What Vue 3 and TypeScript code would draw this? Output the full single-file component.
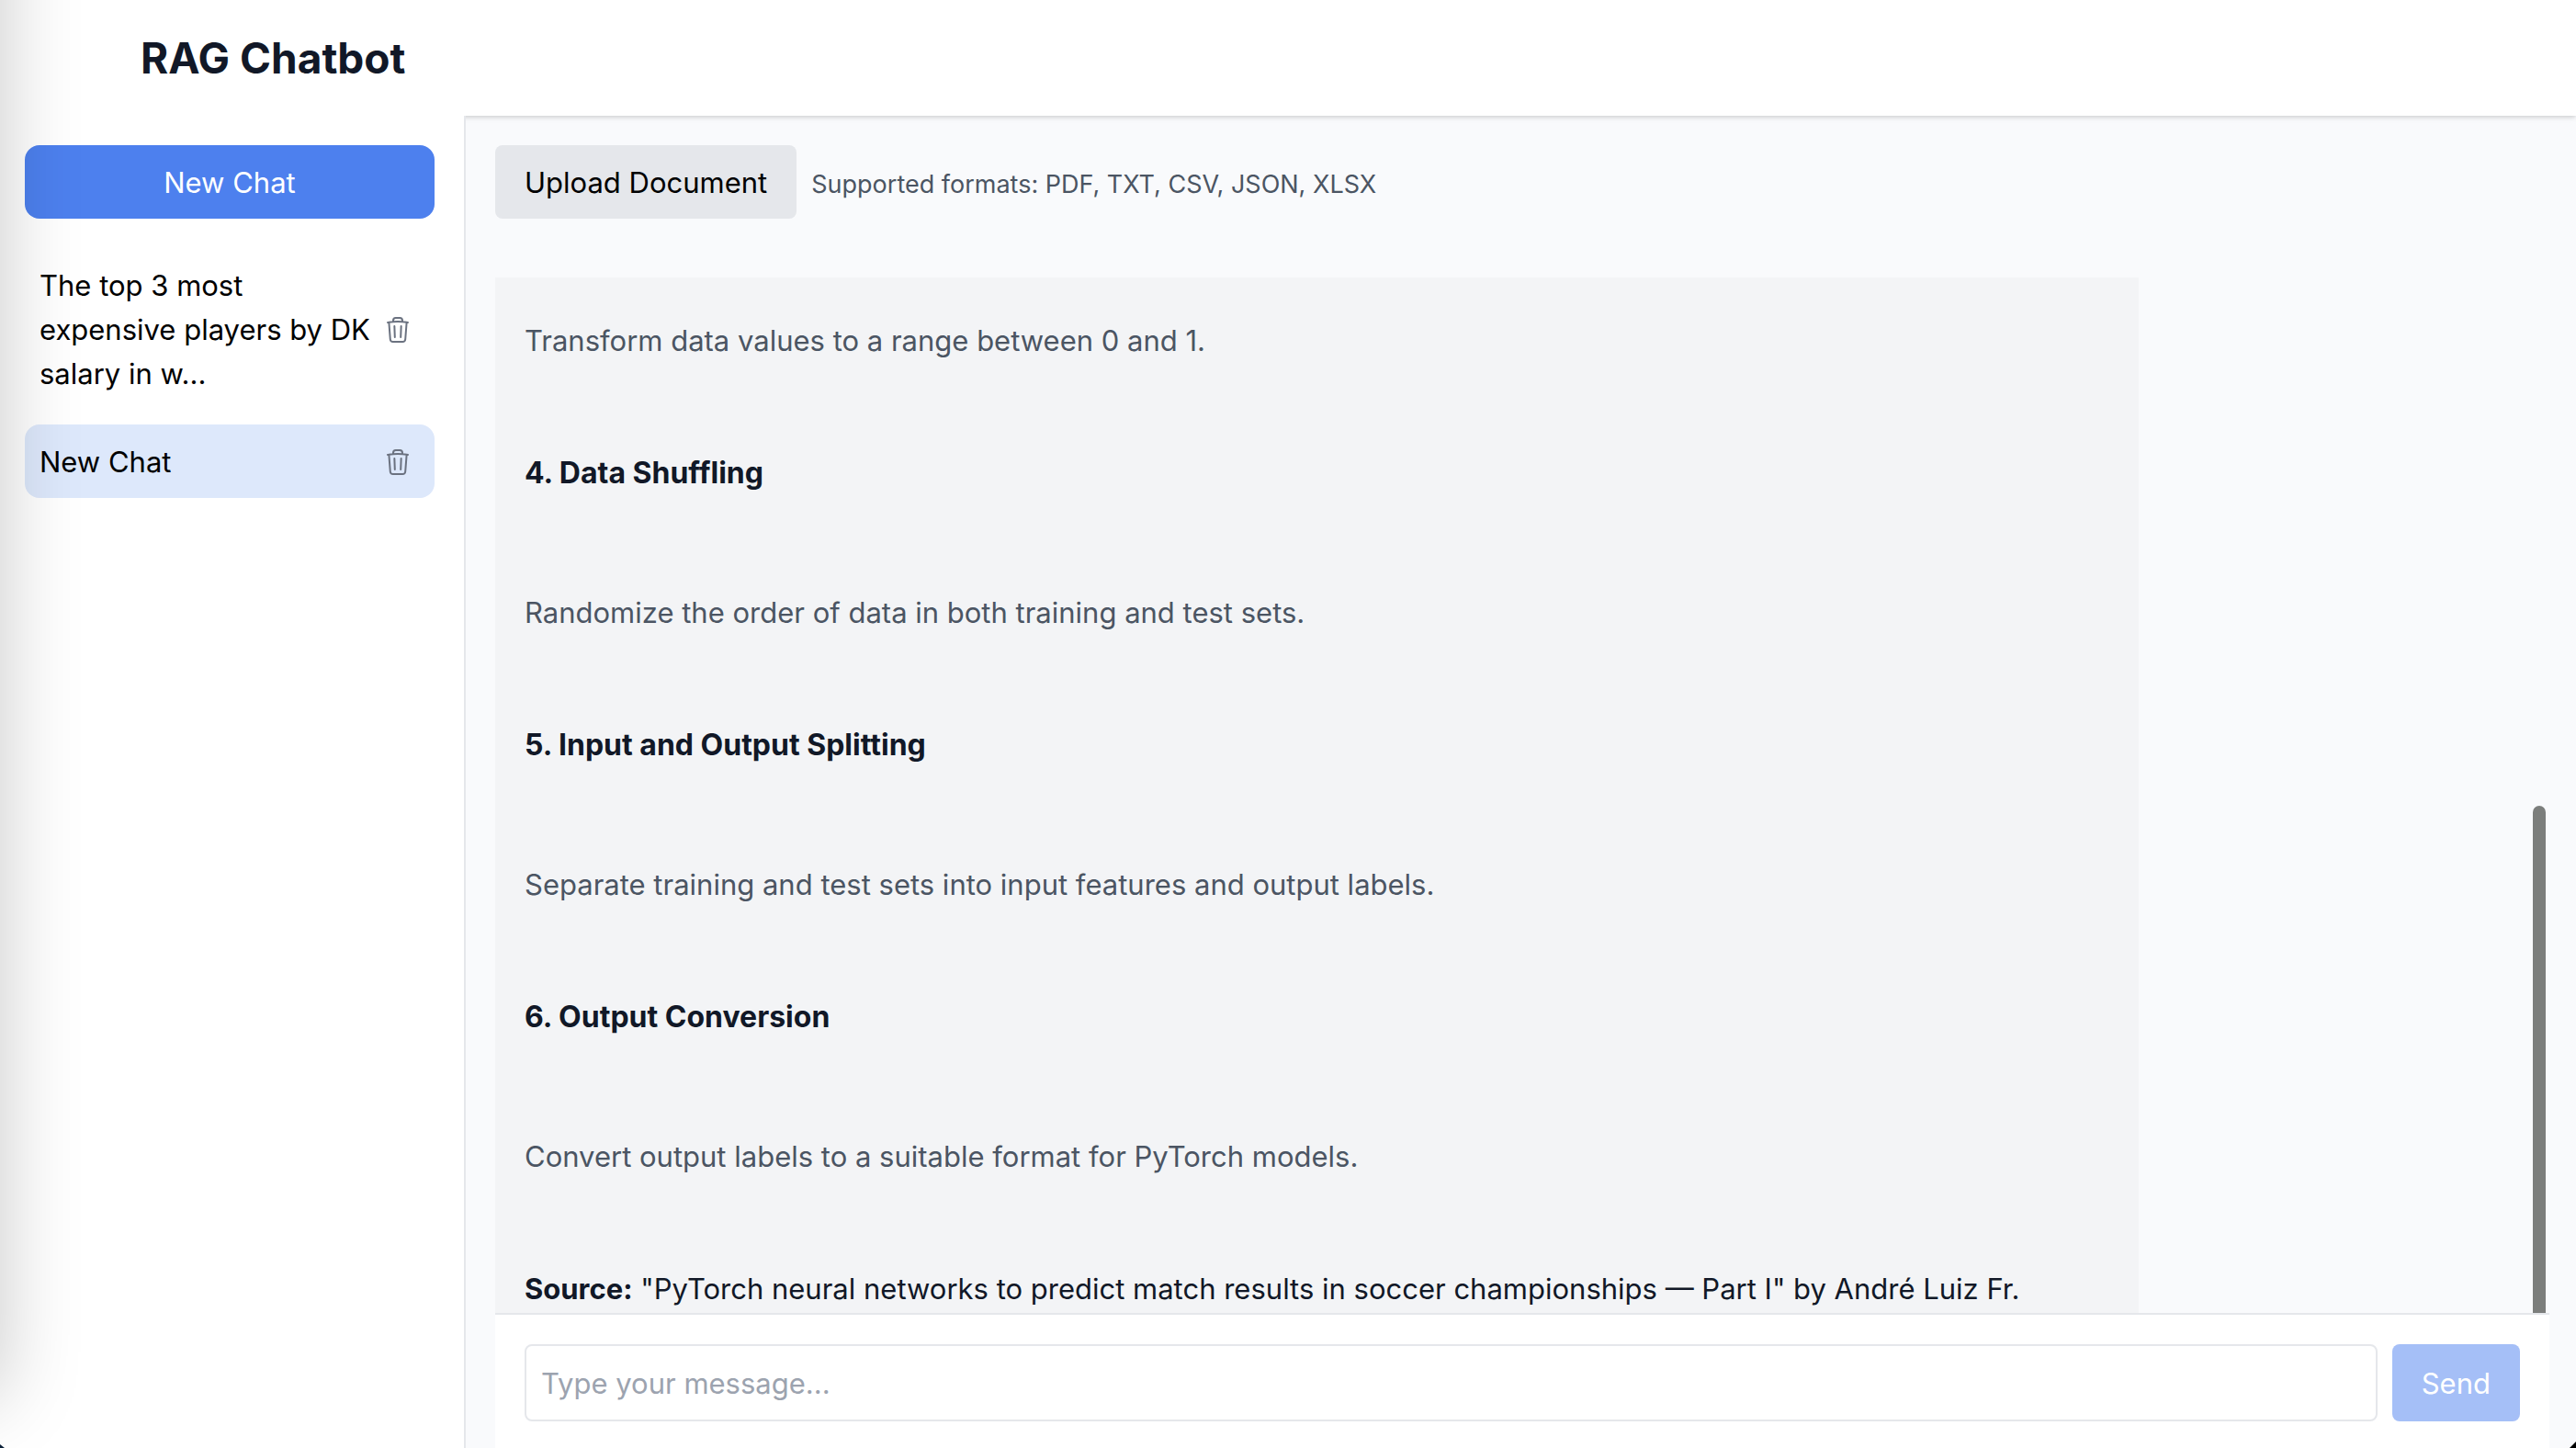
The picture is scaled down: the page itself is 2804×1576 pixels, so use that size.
<script setup lang="ts">
import { ref } from 'vue'

interface Chat {
  id: number
  title: string
}

interface Step {
  heading?: string
  text?: string
}

const chats: Chat[] = [
  { id: 1, title: 'The top 3 most expensive players by DK salary in w...' },
  { id: 2, title: 'New Chat' },
]
const activeId = ref(2)
const draft = ref('')

const steps: Step[] = [
  { text: 'Transform data values to a range between 0 and 1.' },
  { heading: '4. Data Shuffling' },
  { text: 'Randomize the order of data in both training and test sets.' },
  { heading: '5. Input and Output Splitting' },
  { text: 'Separate training and test sets into input features and output labels.' },
  { heading: '6. Output Conversion' },
  { text: 'Convert output labels to a suitable format for PyTorch models.' },
]
</script>

<template>
  <div class="app">
    <header class="header">
      <h1>RAG Chatbot</h1>
    </header>

    <div class="body">
      <aside class="sidebar">
        <button type="button" class="new-chat">New Chat</button>
        <ul class="chats">
          <li
            v-for="chat in chats"
            :key="chat.id"
            class="chat"
            :class="{ active: chat.id === activeId }"
            @click="activeId = chat.id"
          >
            <span class="chat-title">{{ chat.title }}</span>
            <button type="button" class="delete" aria-label="Delete chat">
              <svg viewBox="0 0 24 24" fill="none" stroke="currentColor" stroke-width="1.5" stroke-linecap="round" stroke-linejoin="round">
                <path d="m14.74 9-.346 9m-4.788 0L9.26 9m9.968-3.21c.342.052.682.107 1.022.166m-1.022-.165L18.16 19.673a2.25 2.25 0 0 1-2.244 2.077H8.084a2.25 2.25 0 0 1-2.244-2.077L4.772 5.79m14.456 0a48.108 48.108 0 0 0-3.478-.397m-12 .562c.34-.059.68-.114 1.022-.165m0 0a48.11 48.11 0 0 1 3.478-.397m7.5 0v-.916c0-1.18-.91-2.164-2.09-2.201a51.964 51.964 0 0 0-3.32 0c-1.18.037-2.09 1.022-2.09 2.201v.916m7.5 0a48.667 48.667 0 0 0-7.5 0" />
              </svg>
            </button>
          </li>
        </ul>
      </aside>

      <main class="main">
        <div class="upload">
          <button type="button" class="upload-button">Upload Document</button>
          <span class="formats">Supported formats: PDF, TXT, CSV, JSON, XLSX</span>
        </div>

        <section class="messages">
          <article class="message">
            <template v-for="(step, i) in steps" :key="i">
              <h3 v-if="step.heading">{{ step.heading }}</h3>
              <p v-else>{{ step.text }}</p>
            </template>
            <div class="source">
              <strong>Source:</strong> "PyTorch neural networks to predict match results in soccer championships — Part I" by André Luiz Fr.
            </div>
          </article>
          <div class="thumb"></div>
        </section>

        <form class="composer" @submit.prevent>
          <input v-model="draft" type="text" placeholder="Type your message..." aria-label="Message" />
          <button type="submit" class="send" :disabled="!draft">Send</button>
        </form>
      </main>
    </div>

    <div class="edge-shadow"></div>
    <div class="corner left"></div>
    <div class="corner right"></div>
  </div>
</template>

<style>
body {
  background: #ffffff;
}
</style>

<style scoped>
* {
  box-sizing: border-box;
}
.app {
  position: relative;
  display: flex;
  flex-direction: column;
  height: 100vh;
  overflow: hidden;
  font-family: Inter, "Liberation Sans", sans-serif;
  font-size: 31px;
  line-height: 48px;
  color: #000000;
}
button,
input {
  margin: 0;
  border: 0;
  font: inherit;
  color: inherit;
}
.header {
  position: relative;
  z-index: 1;
  flex: none;
  padding: 31px 153px;
  background: #ffffff;
  box-shadow: 0 2px 6px rgba(0, 0, 0, 0.1), 0 2px 4px -1px rgba(0, 0, 0, 0.1);
}
h1 {
  margin: 0;
  font-size: 46px;
  line-height: 64px;
  font-weight: 700;
  color: #111827;
}
.body {
  display: flex;
  flex: 1;
  min-height: 0;
}
.sidebar {
  position: relative;
  z-index: 2;
  flex: none;
  width: 507px;
  padding: 32px 32px 32px 27px;
  border-right: 2px solid #e5e7eb;
  background: #ffffff;
}
.new-chat {
  display: block;
  width: 100%;
  padding: 17px 16px 15px;
  border-radius: 16px;
  background: #4d80ee;
  color: #ffffff;
}
.chats {
  display: flex;
  flex-direction: column;
  gap: 16px;
  margin: 32px 0 0;
  padding: 0;
  list-style: none;
}
.chat {
  display: flex;
  align-items: center;
  padding: 17px 16px 15px;
  border-radius: 16px;
}
.chat.active {
  background: #dde8fb;
}
.chat-title {
  flex: 1;
}
.delete {
  display: flex;
  padding: 8px;
  margin: -8px 0;
  background: none;
  color: #6b7280;
}
.delete svg {
  width: 32px;
  height: 32px;
}
.main {
  display: flex;
  flex: 1;
  flex-direction: column;
  min-width: 0;
  padding: 32px 29px 0 32px;
  background: #f9fafc;
}
.upload {
  display: flex;
  align-items: baseline;
  gap: 16px;
  margin-bottom: 64px;
}
.upload-button {
  padding: 17px 32px 15px;
  border-radius: 8px;
  background: #e5e7eb;
}
.formats {
  font-size: 27px;
  line-height: 40px;
  color: #4b5563;
}
.messages {
  position: relative;
  flex: 1;
  min-height: 0;
  overflow: hidden;
}
.message {
  width: 80%;
  min-height: 100%;
  padding: 45px 32px 0;
  background: #f3f4f6;
  color: #111827;
}
.message p {
  margin: 0 0 96px;
  color: #4b5563;
}
.message h3 {
  margin: 0 0 104px;
  font-size: 32px;
  font-weight: 700;
}
.source strong {
  font-weight: 700;
}
.thumb {
  position: absolute;
  right: 4px;
  bottom: 0;
  width: 14px;
  height: 49%;
  border-radius: 7px 7px 0 0;
  background: #7c7e7c;
}
.composer {
  display: flex;
  flex: none;
  gap: 16px;
  padding: 32px 32px 29px;
  border-top: 2px solid #e5e7eb;
  background: #ffffff;
}
.composer input {
  flex: 1;
  min-width: 0;
  padding: 16px;
  height: 84px;
  border: 2px solid #e5e7eb;
  border-radius: 8px;
  background: #ffffff;
}
.composer input::placeholder {
  color: #9ca3af;
  opacity: 1;
}
.send {
  padding: 17px 32px 15px;
  border-radius: 8px;
  background: #a5bff7;
  color: #ffffff;
}
.edge-shadow {
  position: absolute;
  z-index: 3;
  top: -200px;
  bottom: 56px;
  left: -200px;
  width: 200px;
  box-shadow: 0 0 88px rgba(0, 0, 0, 0.22);
  pointer-events: none;
}
.corner {
  position: absolute;
  z-index: 4;
  bottom: 0;
}
.corner.left {
  left: 0;
  width: 5px;
  height: 4px;
  background: #0b2038;
  clip-path: polygon(0 0, 100% 100%, 0 100%);
}
.corner.right {
  right: 0;
  width: 7px;
  height: 7px;
  background: #000000;
  clip-path: polygon(100% 0, 100% 100%, 0 100%);
}
</style>
